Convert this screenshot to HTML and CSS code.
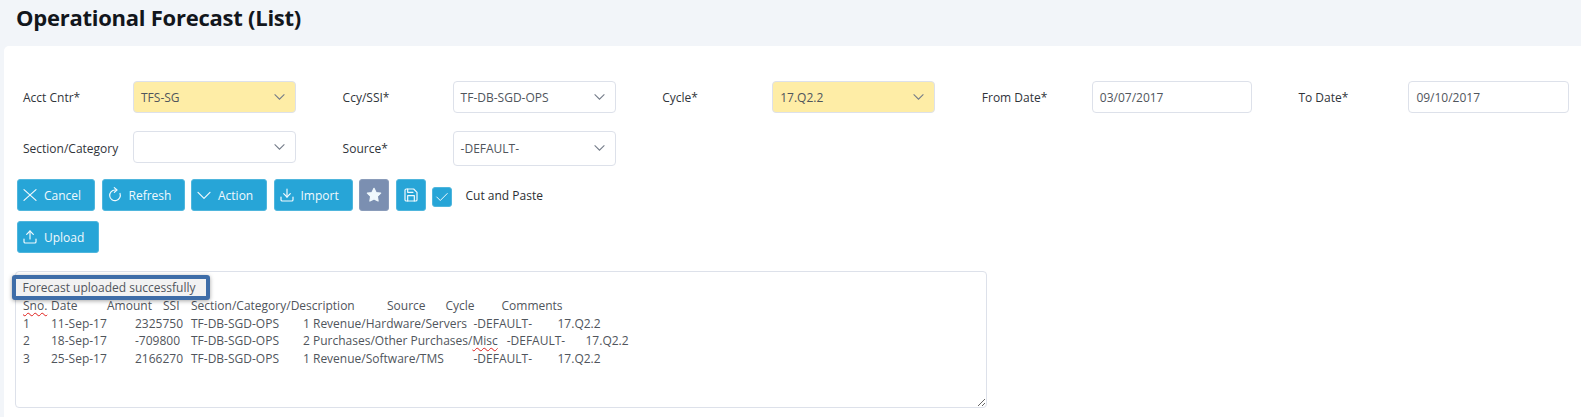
FILE: index.html
```html
<!DOCTYPE html>
<html lang="en">
<head>
<meta charset="utf-8">
<title>Operational Forecast (List)</title>
<link rel="stylesheet" href="styles.css">
</head>
<body>
<svg class="sprites" aria-hidden="true">
  <symbol id="i-chev" viewBox="0 0 24 24"><polyline points="3 8 12 17 21 8"/></symbol>
  <symbol id="i-x" viewBox="0 0 24 24"><line x1="21" y1="4" x2="3" y2="20"/><line x1="3" y1="4" x2="21" y2="20"/></symbol>
  <symbol id="i-rot" viewBox="0 0 24 24"><polyline points="11 1 15 4.5 11 8"/><path d="M14 4.5H12a8 8 0 1 0 7.5 5.2"/></symbol>
  <symbol id="i-down" viewBox="0 0 24 24"><path d="M21 15v4a2 2 0 0 1-2 2H5a2 2 0 0 1-2-2v-4"/><polyline points="7 10 12 15 17 10"/><line x1="12" y1="15" x2="12" y2="3"/></symbol>
  <symbol id="i-up" viewBox="0 0 24 24"><path d="M21 15v4a2 2 0 0 1-2 2H5a2 2 0 0 1-2-2v-4"/><polyline points="17 8 12 3 7 8"/><line x1="12" y1="3" x2="12" y2="15"/></symbol>
  <symbol id="i-star" viewBox="0 0 24 24"><polygon class="solid" points="12 2 15.09 8.26 22 9.27 17 14.14 18.18 21.02 12 17.77 5.82 21.02 7 14.14 2 9.27 8.91 8.26 12 2"/></symbol>
  <symbol id="i-save" viewBox="0 0 24 24"><path d="M19 21H5a2 2 0 0 1-2-2V5a2 2 0 0 1 2-2h11l5 5v11a2 2 0 0 1-2 2z"/><polyline points="17 21 17 13 7 13 7 21"/><polyline points="7 3 7 8 15 8"/></symbol>
  <symbol id="i-check" viewBox="0 0 24 24"><polyline points="21 6 9 18 3 12"/></symbol>
</svg>

<header class="page-head"><h1 class="page-title">Operational Forecast (List)</h1></header>

<main class="card">
  <div class="form-row">
    <div class="field"><label class="field-label">Acct Cntr*</label><div class="control req"><span class="val">TFS-SG</span><svg class="chev"><use href="#i-chev"/></svg></div></div>
    <div class="field"><label class="field-label">Ccy/SSI*</label><div class="control"><span class="val">TF-DB-SGD-OPS</span><svg class="chev"><use href="#i-chev"/></svg></div></div>
    <div class="field"><label class="field-label">Cycle*</label><div class="control req"><span class="val">17.Q2.2</span><svg class="chev"><use href="#i-chev"/></svg></div></div>
    <div class="field"><label class="field-label">From Date*</label><div class="control date"><span class="val">03/07/2017</span></div></div>
    <div class="field"><label class="field-label">To Date*</label><div class="control date wide"><span class="val">09/10/2017</span></div></div>
  </div>
  <div class="form-row second">
    <div class="field"><label class="field-label">Section/Category</label><div class="control"><span class="val"></span><svg class="chev"><use href="#i-chev"/></svg></div></div>
    <div class="field"><label class="field-label">Source*</label><div class="control tall"><span class="val">-DEFAULT-</span><svg class="chev"><use href="#i-chev"/></svg></div></div>
  </div>

  <div class="btn-row">
    <button class="btn w-cancel"><svg class="ico"><use href="#i-x"/></svg>Cancel</button>
    <button class="btn w-refresh"><svg class="ico"><use href="#i-rot"/></svg>Refresh</button>
    <button class="btn w-action"><svg class="ico"><use href="#i-chev"/></svg>Action</button>
    <button class="btn w-import"><svg class="ico"><use href="#i-down"/></svg>Import</button>
    <button class="btn square muted"><svg class="ico"><use href="#i-star"/></svg></button>
    <button class="btn square"><svg class="ico"><use href="#i-save"/></svg></button>
    <span class="check"><svg class="ico"><use href="#i-check"/></svg></span>
    <span class="check-label">Cut and Paste</span>
  </div>
  <div class="btn-row upload-row">
    <button class="btn w-upload"><svg class="ico"><use href="#i-up"/></svg>Upload</button>
  </div>

  <div class="paste-wrap">
    <div class="paste">
<pre class="paste-text"><span class="sp">Sno.</span>	Date		Amount	SSI	Section/Category/Description		Source	<span class="off">Cycle</span>	<span class="off">Comments</span>
1	11-Sep-17	2325750	TF-DB-SGD-OPS	1 Revenue/Hardware/Servers	<span class="off">-DEFAULT-</span>	<span class="off">17.Q2.2</span>
2	18-Sep-17	-709800	TF-DB-SGD-OPS	2 Purchases/Other Purchases/<span class="sp">Misc</span><span class="nudge">-DEFAULT-</span>	<span class="off">17.Q2.2</span>
3	25-Sep-17	2166270	TF-DB-SGD-OPS	1 Revenue/Software/TMS	<span class="off">-DEFAULT-</span>	<span class="off">17.Q2.2</span></pre>
    </div>
    <div class="toast">Forecast uploaded successfully</div>
  </div>
</main>
</body>
</html>
```
FILE: styles.css
```css
* { box-sizing: border-box; }
html, body { margin: 0; padding: 0; }
body {
  width: 1581px;
  height: 417px;
  overflow: hidden;
  background: #f2f5f9;
  font-family: "Open Sans", "Noto Sans", sans-serif;
  font-size: 12px;
  color: #2c2f33;
}
.sprites { display: none; }
.page-head { height: 46px; padding: 2px 0 0 16px; }
.page-title { margin: 0; font-size: 22px; line-height: 30px; font-weight: 700; color: #12161c; letter-spacing: -0.25px; }
.card {
  margin-left: 4px;
  height: 371px;
  background: #fff;
  border-radius: 5px 0 0 0;
  padding: 35px 0 0 13px;
}
.form-row { display: flex; gap: 46.6px; padding-left: 6px; align-items: flex-start; }
.form-row.second { margin-top: 18px; }
.field { display: flex; align-items: flex-start; }
.field-label { width: 110px; padding-top: 8px; line-height: 18px; font-size: 12px; color: #30343a; white-space: nowrap; }
.second .field-label { padding-top: 9px; }
.control {
  width: 163px;
  height: 32px;
  background: #fff;
  border: 1px solid #dde1ea;
  border-radius: 4px;
  padding: 0 9px 0 7px;
  display: flex;
  align-items: center;
  justify-content: space-between;
  font-size: 12px;
  color: #50555c;
}
.control.tall { height: 35px; }
.control.req { background: #feeda6; }
.control.date { width: 160px; }
.control.date.wide { width: 161px; }
.chev { width: 13px; height: 13px; margin-top: -2px; fill: none; stroke: #737b88; stroke-width: 1.9; }
.btn-row { display: flex; align-items: center; gap: 6.5px; margin-top: 13px; }
.upload-row { margin-top: 10px; }
.btn {
  height: 32px;
  padding: 0 0 0 4px;
  border: 1px solid #4fb6dd;
  border-radius: 3px;
  background: #27a5d7;
  color: #f0f9fd;
  font: 12px "Open Sans", "Noto Sans", sans-serif;
  display: inline-flex;
  align-items: center;
  gap: 6px;
}
.ico { width: 16px; height: 16px; fill: none; stroke: currentColor; stroke-width: 1.8; stroke-linecap: round; stroke-linejoin: round; }
.w-cancel { width: 78px; }
.w-refresh { width: 83px; }
.w-action { width: 76px; }
.w-import { width: 79px; }
.w-upload { width: 82px; }
.square { width: 30px; padding: 0; justify-content: center; }
.muted { background: #7b8fb1; border-color: #8a9cba; }
#i-star .solid { fill: currentColor; }
.check {
  width: 20px;
  height: 20px;
  margin-top: 4px;
  background: #27a5d7;
  border: 1px solid #4fb6dd;
  border-radius: 3px;
  color: #fff;
  display: inline-flex;
  align-items: center;
  justify-content: center;
}
.check .ico { width: 14px; height: 14px; stroke-width: 1.6; }
.check-label { margin-left: 7px; font-size: 12px; color: #2c2f33; }
.paste-wrap {
  position: relative;
  width: 972px;
  height: 137px;
  margin-top: 18px;
  margin-left: -2px;
}
.paste {
  width: 972px;
  height: 137px;
  border: 1px solid #dde1ea;
  border-radius: 4px;
  background: #fff;
  overflow: auto;
  resize: both;
}
.paste-text {
  margin: 0;
  padding: 25px 0 0 7px;
  font: 12px/17.6px "Open Sans", "Noto Sans", sans-serif;
  tab-size: 28px;
  color: #50555c;
}
.sp { text-decoration: underline wavy #e0201c; text-decoration-thickness: 1px; text-underline-offset: 2px; }
.nudge { margin-left: 9px; }
.off { margin-left: 2.5px; }
.toast {
  position: absolute;
  left: -3.5px;
  top: 4px;
  width: 198px;
  height: 25px;
  border: 4px solid #3e6da8;
  border-radius: 3px;
  background: #f2f2f2;
  padding-left: 7px;
  font-size: 12px;
  line-height: 17px;
  color: #50555c;
  box-shadow: 0 1px 4px rgba(0,0,0,.35);
  white-space: nowrap;
}
```
